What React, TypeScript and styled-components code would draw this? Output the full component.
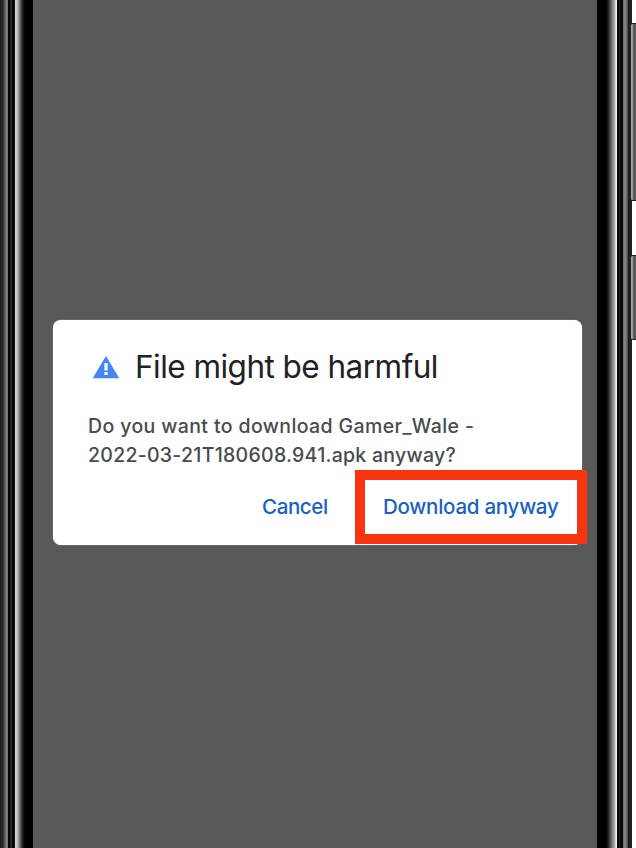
import React from "react";
import styled, { createGlobalStyle } from "styled-components";

const GlobalStyle = createGlobalStyle`
  * { box-sizing: border-box; }
  body { margin: 0; background: #fff; overflow: hidden; }
`;

const Phone = styled.div`
  position: relative;
  display: grid;
  grid-template-columns: 33px 564px 39px;
  width: 636px;
  height: 848px;
`;

const LeftFrame = styled.div`
  background: linear-gradient(90deg,
    #1c1c1c 0, #2a2a2a 3px, #4a4a4a 4px, #8a8a8a 7px, #666 8px,
    #0a0a0a 8px, #000 10px, #222 10px, #333 12px, #050505 12px, #0a0a0a 15px,
    #dedada 15px, #c4c2c2 17px, #8e8e8e 19px, #4a4a4a 21px, #181818 23px, #000 25px, #000 33px);
`;

const RightFrame = styled.div`
  background: linear-gradient(90deg,
    #000 0, #000 9px, #1a1a1a 11px, #4c4c4c 13px, #8c8c8c 16px, #bcbcbc 18px, #f2f2f2 19px, #eee 20px,
    #060606 20px, #060606 22px, #262626 22px, #262626 23px, #050505 23px, #0a0a0a 26px,
    #666 26px, #8a8a8a 28px, #606060 30px, #444 31px, #191919 31px, #222 34px, #222 35px, #fff 35px);
`;

const SideButton = styled.div<{ $top: number; $height: number }>`
  position: absolute;
  top: ${(p) => p.$top}px;
  right: 0;
  width: 6px;
  height: ${(p) => p.$height}px;
  border: 1px solid #222;
  border-right: 0;
  border-radius: 2px 0 0 2px;
  background: linear-gradient(90deg, #aaa 0, #8a8a8a 2px, #4a4a4a 3px, #686868 5px);
`;

const Screen = styled.main`
  display: flex;
  align-items: flex-start;
  padding: 320px 0 0 20px;
  background: #595959;
`;

const Dialog = styled.section`
  width: 529px;
  height: 225px;
  padding: 28px 0 0 36px;
  border-radius: 8px;
  background: #fff;
  box-shadow: 0 0 1px #ddd;
`;

const Header = styled.header`
  display: flex;
  align-items: center;
  height: 38px;
  padding-left: 3px;
`;

const Title = styled.h1`
  margin: 0 0 0 15px;
  font: 400 31.5px/38px Inter, sans-serif;
  letter-spacing: -0.53px;
  color: #202124;
  white-space: nowrap;
`;

const Message = styled.p`
  margin: 26px 0 0 -1px;
  font: 500 19.5px/29px Inter, sans-serif;
  color: #494b4c;
  white-space: nowrap;
`;

const Line = styled.span<{ $spacing: number }>`
  display: block;
  letter-spacing: ${(p) => p.$spacing}px;
`;

const Actions = styled.div`
  display: flex;
  gap: 5px;
  padding-left: 173px;
`;

const TextButton = styled.button<{ $spacing: number }>`
  padding: 0;
  border: 0;
  background: none;
  font: 500 20.5px/28px Inter, sans-serif;
  letter-spacing: ${(p) => p.$spacing}px;
  color: #1a5fc8;
  white-space: nowrap;
`;

const CancelSlot = styled.div`
  width: 88px;
  flex: none;
  padding-top: 23px;
`;

const Highlight = styled.div`
  flex: none;
  width: 232px;
  height: 74px;
  padding: 13px 0 0 18px;
  border: 10px solid #f8330f;
  background: #fff;
`;

const WarningIcon = () => (
  <svg width="28" height="26" viewBox="0 0 28 26">
    <path d="M14 2 27.3 24.2H.7Z" fill="#4285f4" />
    <path d="M12.4 9h3.2v7.4h-3.2zM12.4 18h3.2v3h-3.2z" fill="#fff" />
  </svg>
);

export default function App() {
  return (
    <>
      <GlobalStyle />
      <Phone>
        <LeftFrame />
        <Screen>
          <Dialog>
            <Header>
              <WarningIcon />
              <Title>File might be harmful</Title>
            </Header>
            <Message>
              <Line $spacing={0.38}>Do you want to download Gamer_Wale -</Line>
              <Line $spacing={0.27}>2022-03-21T180608.941.apk anyway?</Line>
            </Message>
            <Actions>
              <CancelSlot>
                <TextButton $spacing={-0.4}>Cancel</TextButton>
              </CancelSlot>
              <Highlight>
                <TextButton $spacing={-0.25}>Download anyway</TextButton>
              </Highlight>
            </Actions>
          </Dialog>
        </Screen>
        <RightFrame />
        <SideButton $top={23} $height={178} />
        <SideButton $top={255} $height={85} />
      </Phone>
    </>
  );
}
